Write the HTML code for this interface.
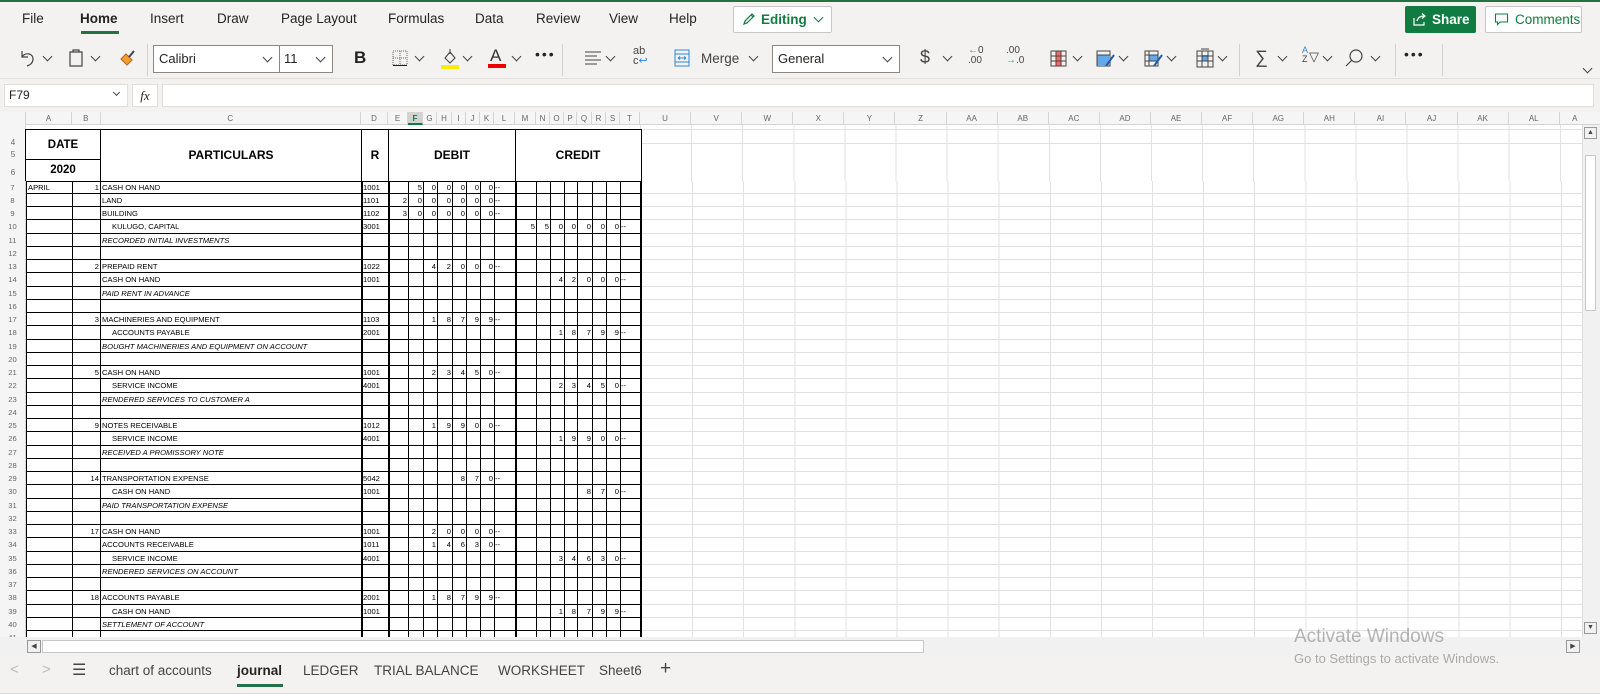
<!DOCTYPE html>
<html><head><meta charset="utf-8">
<style>
*{margin:0;padding:0;box-sizing:border-box}
body{width:1600px;height:694px;overflow:hidden;background:#fff;font-family:"Liberation Sans",sans-serif;position:relative;color:#252423}
.a{position:absolute}
.top{left:0;top:0;width:1600px;height:112px;background:#f3f2f1;border-top:2px solid #217346}
.tab{position:absolute;top:9px;font-size:13.5px;color:#252423}
.rib{position:absolute;top:48px;height:18px;font-size:13px}
.chev{position:absolute;top:51px;width:7px;height:7px;border-right:1.2px solid #444;border-bottom:1.2px solid #444;transform:rotate(45deg)}
.sep{position:absolute;top:42px;width:1px;height:32px;background:#d2d0ce}
.box{position:absolute;background:#fff;border:1px solid #8a8886}
.colh{left:0;top:112px;width:1600px;height:13px;background:#f5f5f5;border-bottom:1px solid #d4d4d4}
.colh span{position:absolute;top:0;font-size:8px;line-height:13px;color:#666;text-align:center;border-right:1px solid #d4d4d4;height:13px}
.grid{left:0;top:180.5px;width:1582px;height:456px;overflow:hidden}
.r{position:relative;height:13.26px;font-size:7.6px;line-height:13px;color:#000;
background:linear-gradient(#000,#000) 26px 100%/614px 1px no-repeat,linear-gradient(#e1e1e1,#e1e1e1) 640px 100%/942px 1px no-repeat}
.r>*{position:absolute;top:0;white-space:nowrap;font-style:normal}
.r>.it{font-style:italic}
.n{left:0;width:26px;text-align:center;color:#666;background:#f5f5f5;height:13.26px;border-right:1px solid #d4d4d4}
.A{left:28px}.B{left:72px;width:27px;text-align:right}.C{left:102px}.Ci{left:112px}
.D{left:363px}
.E{left:388px;width:19px;text-align:right}.F{left:408px;width:14px;text-align:right}.G{left:423px;width:13px;text-align:right}
.H{left:437px;width:14px;text-align:right}.I{left:452px;width:13px;text-align:right}.J{left:466px;width:13px;text-align:right}
.K{left:480px;width:13px;text-align:right}.L{left:495px}
.M{left:515px;width:20px;text-align:right}.N{left:536px;width:13px;text-align:right}.O{left:550px;width:13px;text-align:right}
.P{left:564px;width:12px;text-align:right}.Q{left:577px;width:14px;text-align:right}.R{left:592px;width:13px;text-align:right}
.S{left:606px;width:13px;text-align:right}.T{left:621px}
.v{position:absolute;top:180.5px;height:456px;width:1px;background:#000}
.hd{position:absolute;border:1.5px solid #000;font-weight:bold;display:flex;align-items:center;justify-content:center;color:#000;background:#fff}
</style></head><body>
<div class="a top">
 <div class="tab" style="left:22px">File</div>
 <div class="tab" style="left:80px;font-weight:bold">Home</div>
 <div class="a" style="left:81px;top:29px;width:38px;height:3px;background:#217346"></div>
 <div class="tab" style="left:150px">Insert</div>
 <div class="tab" style="left:217px">Draw</div>
 <div class="tab" style="left:281px">Page Layout</div>
 <div class="tab" style="left:388px">Formulas</div>
 <div class="tab" style="left:475px">Data</div>
 <div class="tab" style="left:536px">Review</div>
 <div class="tab" style="left:609px">View</div>
 <div class="tab" style="left:669px">Help</div>
 <div class="box" style="left:733px;top:4px;width:99px;height:27px;border-color:#c8c6c4;border-radius:2px;color:#107c41;font-size:13.5px;font-weight:bold;line-height:25px;padding-left:27px">Editing</div>
 <svg class="a" style="left:742px;top:10px" width="14" height="14" viewBox="0 0 14 14"><path d="M2 12 L3 9 L10 2 L12 4 L5 11 Z M9 3 L11 5" fill="none" stroke="#107c41" stroke-width="1.2"/></svg>
 <div class="chev" style="left:815px;top:12px;border-color:#107c41"></div>
 <div class="a" style="left:1405px;top:4px;width:71px;height:27px;background:#107c41;border-radius:2px;color:#fff;font-size:13.5px;font-weight:bold;line-height:27px;padding-left:27px">Share</div>
 <svg class="a" style="left:1412px;top:10px" width="15" height="15" viewBox="0 0 15 15"><path d="M2 6 V13 H12 V10 M5 9 C6 5 9 4 12 4 M10 1.5 L13 4 L10 6.5" fill="none" stroke="#fff" stroke-width="1.2"/></svg>
 <div class="box" style="left:1485px;top:4px;width:97px;height:27px;border-color:#c8c6c4;border-radius:2px;color:#107c41;font-size:13.5px;line-height:25px;padding-left:29px">Comments</div>
 <svg class="a" style="left:1494px;top:10px" width="15" height="15" viewBox="0 0 15 15"><path d="M1.5 2 H13.5 V10 H6 L3.5 12.5 V10 H1.5 Z" fill="none" stroke="#107c41" stroke-width="1.1"/></svg>

 <svg class="a" style="left:18px;top:46px" width="20" height="20" viewBox="0 0 20 20"><path d="M4 3 V9 H10 M4 9 C7 4 15 5 15 11 C15 15 12 17 9 18" fill="none" stroke="#444" stroke-width="1.2"/></svg>
 <div class="chev" style="left:44px"></div>
 <svg class="a" style="left:67px;top:46px" width="18" height="20" viewBox="0 0 18 20"><path d="M3 4 H15 V18 H3 Z M6 4 V2 H12 V4" fill="none" stroke="#444" stroke-width="1.2"/></svg>
 <div class="chev" style="left:92px"></div>
 <svg class="a" style="left:118px;top:46px" width="18" height="20" viewBox="0 0 18 20"><path d="M3 11 L9 17 L14 12 L8 6 Z" fill="#f0a030" stroke="#c06010"/><path d="M11 9 L16 3" stroke="#444" stroke-width="2"/></svg>
 <div class="sep" style="left:147px"></div>
 <div class="box" style="left:153px;top:43px;width:127px;height:28px;font-size:13px;line-height:26px;padding-left:5px">Calibri</div>
 <div class="chev" style="left:264px;top:52px"></div>
 <div class="box" style="left:279px;top:43px;width:54px;height:28px;font-size:13px;line-height:26px;padding-left:4px">11</div>
 <div class="chev" style="left:317px;top:52px"></div>
 <div class="rib" style="left:354px;font-weight:bold;font-size:17px;top:46px;color:#222">B</div>
 <svg class="a" style="left:391px;top:47px" width="18" height="18" viewBox="0 0 18 18"><path d="M2 2 H16 V16 H2 Z M9 2 V16 M2 9 H16" fill="none" stroke="#666" stroke-dasharray="1 1"/><path d="M2 16.5 H16" stroke="#222"/></svg>
 <div class="chev" style="left:416px"></div>
 <svg class="a" style="left:440px;top:46px" width="20" height="22" viewBox="0 0 20 22"><path d="M5 10 L10 4 L15 10 L10 15 Z M10 1 V6" fill="none" stroke="#444" stroke-width="1.1"/><rect x="1" y="17" width="18" height="4" fill="#ffeb00"/></svg>
 <div class="chev" style="left:464px"></div>
 <div class="rib" style="left:490px;top:44px;font-size:17px;color:#333">A</div>
 <div class="a" style="left:488px;top:62px;width:18px;height:4px;background:#e00"></div>
 <div class="chev" style="left:513px"></div>
 <div class="rib" style="left:535px;top:44px;font-size:14px;letter-spacing:2px">•••</div>
 <div class="sep" style="left:562px"></div>
 <svg class="a" style="left:584px;top:48px" width="18" height="16" viewBox="0 0 18 16"><path d="M1 2 H17 M1 6 H13 M1 10 H17 M1 14 H13" stroke="#444"/></svg>
 <div class="chev" style="left:607px"></div>
 <div class="rib" style="left:633px;top:44px;font-size:11px;line-height:10px;color:#444">ab<br>c<span style="color:#2b88d8">↩</span></div>
 <svg class="a" style="left:673px;top:47px" width="18" height="18" viewBox="0 0 18 18"><path d="M2 1 V17 H16 V1 Z M2 5 H16 M2 13 H16" fill="none" stroke="#2b88d8"/><path d="M5 9 H13 M5 9 L7 7.5 M5 9 L7 10.5 M13 9 L11 7.5 M13 9 L11 10.5" fill="none" stroke="#2b88d8"/></svg>
 <div class="rib" style="left:701px;top:49px;font-size:13.5px;color:#444">Merge</div>
 <div class="chev" style="left:750px"></div>
 <div class="box" style="left:772px;top:43px;width:128px;height:28px;font-size:13px;line-height:26px;padding-left:5px">General</div>
 <div class="chev" style="left:884px;top:52px"></div>
 <div class="rib" style="left:920px;top:45px;font-size:18px;color:#444">$</div>
 <div class="chev" style="left:944px"></div>
 <div class="rib" style="left:968px;top:44px;font-size:10px;line-height:10px;color:#444"><span style="color:#2b88d8">←</span>0<br>.00</div>
 <div class="rib" style="left:1006px;top:44px;font-size:10px;line-height:10px;color:#444">.00<br><span style="color:#2b88d8">→</span>.0</div>
 <svg class="a" style="left:1050px;top:48px" width="17" height="17" viewBox="0 0 17 17"><rect x="6" y="1" width="5" height="15" fill="#f66"/><path d="M1 1 H16 V16 H1 Z M6 1 V16 M11 1 V16 M1 6 H16 M1 11 H16" fill="none" stroke="#444"/></svg>
 <div class="chev" style="left:1074px"></div>
 <svg class="a" style="left:1096px;top:48px" width="20" height="19" viewBox="0 0 20 19"><rect x="1" y="5" width="12" height="10" fill="#64a8e8"/><path d="M1 1 H14 V16 H1 Z M1 5 H14" fill="none" stroke="#444"/><path d="M18 5 L10 16" stroke="#1f5fa8" stroke-width="2"/></svg>
 <div class="chev" style="left:1120px"></div>
 <svg class="a" style="left:1144px;top:48px" width="20" height="19" viewBox="0 0 20 19"><rect x="5" y="5" width="9" height="6" fill="#64a8e8"/><path d="M1 1 H14 V16 H1 Z M1 5 H14 M1 11 H14 M5 1 V16" fill="none" stroke="#444"/><path d="M18 5 L10 16" stroke="#1f5fa8" stroke-width="2"/></svg>
 <div class="chev" style="left:1168px"></div>
 <svg class="a" style="left:1196px;top:46px" width="18" height="20" viewBox="0 0 18 20"><rect x="6" y="7" width="6" height="6" fill="#64a8e8"/><path d="M1 3 H17 V19 H1 Z M6 3 V19 M12 3 V19 M1 8 H17 M1 13 H17 M5 1 H13" fill="none" stroke="#444"/></svg>
 <div class="chev" style="left:1219px"></div>
 <div class="sep" style="left:1239px"></div>
 <div class="rib" style="left:1255px;top:45px;font-size:18px;color:#444">∑</div>
 <div class="chev" style="left:1279px"></div>
 <div class="rib" style="left:1302px;top:44px;font-size:9px;line-height:9px;color:#444"><span style="color:#2b88d8">A</span><br>Z</div>
 <div class="rib" style="left:1309px;top:47px;font-size:13px;color:#444">▽</div>
 <div class="chev" style="left:1324px"></div>
 <svg class="a" style="left:1344px;top:46px" width="20" height="20" viewBox="0 0 20 20"><circle cx="12" cy="8" r="6" fill="none" stroke="#444" stroke-width="1.2"/><path d="M8 12 L2 18" stroke="#444" stroke-width="1.2"/></svg>
 <div class="chev" style="left:1372px"></div>
 <div class="sep" style="left:1395px"></div>
 <div class="rib" style="left:1404px;top:44px;font-size:14px;letter-spacing:2px">•••</div>
 <div class="sep" style="left:1442px"></div>
 <div class="chev" style="left:1584px;top:63px"></div>
 <div class="a" style="left:0;top:76px;width:1600px;height:1px;background:#e1dfdd"></div>
 <div class="box" style="left:4px;top:82px;width:124px;height:23px;border-color:#e1dfdd;font-size:12px;line-height:21px;padding-left:4px">F79</div>
 <div class="chev" style="left:114px;top:88px;width:5px;height:5px"></div>
 <div class="box" style="left:132px;top:82px;width:26px;height:23px;border-color:#e1dfdd;font-family:'Liberation Serif',serif;font-style:italic;font-size:13px;line-height:21px;text-align:center">fx</div>
 <div class="box" style="left:162px;top:82px;width:1432px;height:23px;border-color:#e1dfdd"></div>
</div>

<div class="a colh">
 <span style="left:0;width:26px;background:#f5f5f5"></span>
 <span style="left:26px;width:46px">A</span><span style="left:72px;width:28.5px">B</span><span style="left:100.5px;width:260.5px">C</span>
 <span style="left:361px;width:27px">D</span><span style="left:388px;width:20px">E</span>
 <span style="left:408px;width:15px;background:#d2d2d2;color:#107c41;font-weight:bold;border-bottom:2px solid #107c41">F</span>
 <span style="left:423px;width:14px">G</span><span style="left:437px;width:15px">H</span><span style="left:452px;width:14px">I</span><span style="left:466px;width:14px">J</span><span style="left:480px;width:14px">K</span><span style="left:494px;width:21px">L</span>
 <span style="left:515px;width:21px">M</span><span style="left:536px;width:14px">N</span><span style="left:550px;width:14px">O</span><span style="left:564px;width:13px">P</span><span style="left:577px;width:15px">Q</span><span style="left:592px;width:14px">R</span><span style="left:606px;width:14px">S</span><span style="left:620px;width:20px">T</span>
 <span style="left:640px;width:51.1px">U</span><span style="left:691.1px;width:51.1px">V</span><span style="left:742.2px;width:51.1px">W</span><span style="left:793.3px;width:51.1px">X</span><span style="left:844.4px;width:51.1px">Y</span><span style="left:895.5px;width:51.1px">Z</span><span style="left:946.6px;width:51.1px">AA</span><span style="left:997.7px;width:51.1px">AB</span><span style="left:1048.8px;width:51.1px">AC</span><span style="left:1099.9px;width:51.1px">AD</span><span style="left:1151px;width:51.1px">AE</span><span style="left:1202.1px;width:51.1px">AF</span><span style="left:1253.2px;width:51.1px">AG</span><span style="left:1304.3px;width:51.1px">AH</span><span style="left:1355.4px;width:51.1px">AI</span><span style="left:1406.5px;width:51.1px">AJ</span><span style="left:1457.6px;width:51.1px">AK</span><span style="left:1508.7px;width:51.1px">AL</span><span style="left:1559.8px;width:30px;border:none">A</span>
</div>

<div class="a" style="left:0;top:125px;width:26px;height:56px;background:#f5f5f5;border-right:1px solid #d4d4d4;font-size:8px;color:#666;text-align:center">
 <div class="a" style="top:13px;width:26px">4</div><div class="a" style="top:25px;width:26px">5</div><div class="a" style="top:43px;width:26px">6</div>
</div>
<div class="a" style="left:640px;top:125px;width:942px;height:56px;background:repeating-linear-gradient(to right,#e1e1e1 0 1px,transparent 1px 51.1px),repeating-linear-gradient(to bottom,transparent 0 4px,#e1e1e1 4px 5px,transparent 5px 18px,#e1e1e1 18px 19px,transparent 19px 56px)"></div>
<div class="hd" style="left:25px;top:129px;width:76px;height:31px;font-size:11.5px">DATE</div>
<div class="hd" style="left:25px;top:158.5px;width:76px;height:23px;font-size:11.5px">2020</div>
<div class="hd" style="left:99.5px;top:129px;width:263px;height:52.5px;font-size:12px">PARTICULARS</div>
<div class="hd" style="left:360.5px;top:129px;width:29px;height:52.5px;font-size:12px">R</div>
<div class="hd" style="left:387.5px;top:129px;width:129px;height:52.5px;font-size:12px">DEBIT</div>
<div class="hd" style="left:514.5px;top:129px;width:127px;height:52.5px;font-size:12px">CREDIT</div>

<div class="a grid">
<div class="r"><i class="n">7</i><i class="A">APRIL</i><i class="B">1</i><i class="C">CASH ON HAND</i><i class="D">1001</i><i class="F">5</i><i class="G">0</i><i class="H">0</i><i class="I">0</i><i class="J">0</i><i class="K">0</i><i class="L">--</i></div>
<div class="r"><i class="n">8</i><i class="C">LAND</i><i class="D">1101</i><i class="E">2</i><i class="F">0</i><i class="G">0</i><i class="H">0</i><i class="I">0</i><i class="J">0</i><i class="K">0</i><i class="L">--</i></div>
<div class="r"><i class="n">9</i><i class="C">BUILDING</i><i class="D">1102</i><i class="E">3</i><i class="F">0</i><i class="G">0</i><i class="H">0</i><i class="I">0</i><i class="J">0</i><i class="K">0</i><i class="L">--</i></div>
<div class="r"><i class="n">10</i><i class="Ci">KULUGO, CAPITAL</i><i class="D">3001</i><i class="M">5</i><i class="N">5</i><i class="O">0</i><i class="P">0</i><i class="Q">0</i><i class="R">0</i><i class="S">0</i><i class="T">--</i></div>
<div class="r"><i class="n">11</i><i class="C it">RECORDED INITIAL INVESTMENTS</i></div>
<div class="r"><i class="n">12</i></div>
<div class="r"><i class="n">13</i><i class="B">2</i><i class="C">PREPAID RENT</i><i class="D">1022</i><i class="G">4</i><i class="H">2</i><i class="I">0</i><i class="J">0</i><i class="K">0</i><i class="L">--</i></div>
<div class="r"><i class="n">14</i><i class="C">CASH ON HAND</i><i class="D">1001</i><i class="O">4</i><i class="P">2</i><i class="Q">0</i><i class="R">0</i><i class="S">0</i><i class="T">--</i></div>
<div class="r"><i class="n">15</i><i class="C it">PAID RENT IN ADVANCE</i></div>
<div class="r"><i class="n">16</i></div>
<div class="r"><i class="n">17</i><i class="B">3</i><i class="C">MACHINERIES AND EQUIPMENT</i><i class="D">1103</i><i class="G">1</i><i class="H">8</i><i class="I">7</i><i class="J">9</i><i class="K">9</i><i class="L">--</i></div>
<div class="r"><i class="n">18</i><i class="Ci">ACCOUNTS PAYABLE</i><i class="D">2001</i><i class="O">1</i><i class="P">8</i><i class="Q">7</i><i class="R">9</i><i class="S">9</i><i class="T">--</i></div>
<div class="r"><i class="n">19</i><i class="C it">BOUGHT MACHINERIES AND EQUIPMENT ON ACCOUNT</i></div>
<div class="r"><i class="n">20</i></div>
<div class="r"><i class="n">21</i><i class="B">5</i><i class="C">CASH ON HAND</i><i class="D">1001</i><i class="G">2</i><i class="H">3</i><i class="I">4</i><i class="J">5</i><i class="K">0</i><i class="L">--</i></div>
<div class="r"><i class="n">22</i><i class="Ci">SERVICE INCOME</i><i class="D">4001</i><i class="O">2</i><i class="P">3</i><i class="Q">4</i><i class="R">5</i><i class="S">0</i><i class="T">--</i></div>
<div class="r"><i class="n">23</i><i class="C it">RENDERED SERVICES TO CUSTOMER A</i></div>
<div class="r"><i class="n">24</i></div>
<div class="r"><i class="n">25</i><i class="B">9</i><i class="C">NOTES RECEIVABLE</i><i class="D">1012</i><i class="G">1</i><i class="H">9</i><i class="I">9</i><i class="J">0</i><i class="K">0</i><i class="L">--</i></div>
<div class="r"><i class="n">26</i><i class="Ci">SERVICE INCOME</i><i class="D">4001</i><i class="O">1</i><i class="P">9</i><i class="Q">9</i><i class="R">0</i><i class="S">0</i><i class="T">--</i></div>
<div class="r"><i class="n">27</i><i class="C it">RECEIVED A PROMISSORY NOTE</i></div>
<div class="r"><i class="n">28</i></div>
<div class="r"><i class="n">29</i><i class="B">14</i><i class="C">TRANSPORTATION EXPENSE</i><i class="D">5042</i><i class="I">8</i><i class="J">7</i><i class="K">0</i><i class="L">--</i></div>
<div class="r"><i class="n">30</i><i class="Ci">CASH ON HAND</i><i class="D">1001</i><i class="Q">8</i><i class="R">7</i><i class="S">0</i><i class="T">--</i></div>
<div class="r"><i class="n">31</i><i class="C it">PAID TRANSPORTATION EXPENSE</i></div>
<div class="r"><i class="n">32</i></div>
<div class="r"><i class="n">33</i><i class="B">17</i><i class="C">CASH ON HAND</i><i class="D">1001</i><i class="G">2</i><i class="H">0</i><i class="I">0</i><i class="J">0</i><i class="K">0</i><i class="L">--</i></div>
<div class="r"><i class="n">34</i><i class="C">ACCOUNTS RECEIVABLE</i><i class="D">1011</i><i class="G">1</i><i class="H">4</i><i class="I">6</i><i class="J">3</i><i class="K">0</i><i class="L">--</i></div>
<div class="r"><i class="n">35</i><i class="Ci">SERVICE INCOME</i><i class="D">4001</i><i class="O">3</i><i class="P">4</i><i class="Q">6</i><i class="R">3</i><i class="S">0</i><i class="T">--</i></div>
<div class="r"><i class="n">36</i><i class="C it">RENDERED SERVICES ON ACCOUNT</i></div>
<div class="r"><i class="n">37</i></div>
<div class="r"><i class="n">38</i><i class="B">18</i><i class="C">ACCOUNTS PAYABLE</i><i class="D">2001</i><i class="G">1</i><i class="H">8</i><i class="I">7</i><i class="J">9</i><i class="K">9</i><i class="L">--</i></div>
<div class="r"><i class="n">39</i><i class="Ci">CASH ON HAND</i><i class="D">1001</i><i class="O">1</i><i class="P">8</i><i class="Q">7</i><i class="R">9</i><i class="S">9</i><i class="T">--</i></div>
<div class="r"><i class="n">40</i><i class="C it">SETTLEMENT OF ACCOUNT</i></div>
<div class="r"><i class="n">41</i></div>
</div>
<div class="v" style="left:25.5px"></div><div class="v" style="left:72px"></div><div class="v" style="left:100px"></div><div class="v" style="left:361px;width:1.5px"></div><div class="v" style="left:388px;width:1.5px"></div>
<div class="v" style="left:408px"></div><div class="v" style="left:423px"></div><div class="v" style="left:437px"></div><div class="v" style="left:452px"></div><div class="v" style="left:466px"></div><div class="v" style="left:480px"></div><div class="v" style="left:494px"></div><div class="v" style="left:515px;width:1.5px"></div>
<div class="v" style="left:536px"></div><div class="v" style="left:550px"></div><div class="v" style="left:564px"></div><div class="v" style="left:577px"></div><div class="v" style="left:592px"></div><div class="v" style="left:606px"></div><div class="v" style="left:620px"></div><div class="v" style="left:640px;width:1.5px"></div>
<div class="a" style="left:641.5px;top:180.5px;width:940px;height:456px;background:repeating-linear-gradient(to right,transparent 0 50.1px,#e1e1e1 50.1px 51.1px)"></div>

<div class="a" style="left:1582px;top:125px;width:18px;height:512px;background:#f1f1f1;border-left:1px solid #ddd"></div>
<div class="a" style="left:1584px;top:127px;width:13px;height:12px;border:1px solid #999;font-size:7px;text-align:center;line-height:10px;color:#444">▲</div>
<div class="a" style="left:1585px;top:155px;width:11px;height:156px;background:#fff;border:1px solid #c8c8c8"></div>
<div class="a" style="left:1584px;top:622px;width:13px;height:12px;border:1px solid #999;font-size:7px;text-align:center;line-height:10px;color:#444">▼</div>
<div class="a" style="left:0;top:637px;width:1600px;height:18px;background:#f1f1f1"></div>
<div class="a" style="left:27px;top:640px;width:14px;height:13px;border:1px solid #999;font-size:7px;text-align:center;line-height:11px;color:#444">◀</div>
<div class="a" style="left:42px;top:640px;width:882px;height:13px;background:#fff;border:1px solid #c8c8c8"></div>
<div class="a" style="left:1566px;top:640px;width:14px;height:13px;border:1px solid #999;font-size:7px;text-align:center;line-height:11px;color:#444">▶</div>
<div class="a" style="left:0;top:655px;width:1600px;height:39px;background:#f3f2f1;font-size:13.5px;color:#444">
 <div class="a" style="left:10px;top:6px;color:#bbb;font-size:15px">&lt;</div>
 <div class="a" style="left:42px;top:6px;color:#bbb;font-size:15px">&gt;</div>
 <div class="a" style="left:72px;top:5px;font-size:16px">☰</div>
 <div class="a" style="left:109px;top:8px">chart of accounts</div>
 <div class="a" style="left:237px;top:8px;font-weight:bold;color:#252423">journal</div>
 <div class="a" style="left:237px;top:29px;width:46px;height:3px;background:#217346"></div>
 <div class="a" style="left:303px;top:8px">LEDGER</div>
 <div class="a" style="left:374px;top:8px">TRIAL BALANCE</div>
 <div class="a" style="left:498px;top:8px">WORKSHEET</div>
 <div class="a" style="left:599px;top:8px">Sheet6</div>
 <div class="a" style="left:660px;top:3px;font-size:19px">+</div>
 <div class="a" style="left:0;top:38px;width:1600px;height:1px;background:#ddd"></div>
</div>
<div class="a" style="left:1294px;top:626px;font-size:19px;color:rgba(120,120,120,0.55)">Activate Windows</div>
<div class="a" style="left:1294px;top:651px;font-size:13px;color:rgba(120,120,120,0.6)">Go to Settings to activate Windows.</div>
</body></html>
